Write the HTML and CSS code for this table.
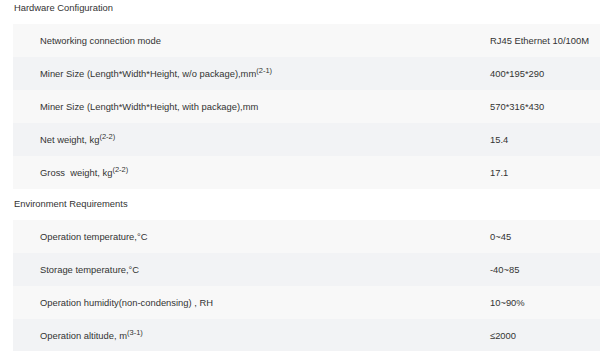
FILE: index.html
```html
<!DOCTYPE html>
<html lang="en">

<head>
    <meta charset="UTF-8">
    <meta name="viewport" content="width=device-width, initial-scale=1.0">
    <title>Specifications</title>
    <link rel="stylesheet" href="styles.css">
</head>

<body>

    <div class="spec-title">Hardware Configuration</div>
    <table class="spec-table">
        <tr>
            <td class="label">Networking connection mode</td>
            <td class="value">RJ45 Ethernet 10/100M</td>
        </tr>
        <tr>
            <td class="label">Miner Size (Length*Width*Height, w/o package),mm<sup>(2-1)</sup></td>
            <td class="value">400*195*290</td>
        </tr>
        <tr>
            <td class="label">Miner Size (Length*Width*Height, with package),mm</td>
            <td class="value">570*316*430</td>
        </tr>
        <tr>
            <td class="label">Net weight, kg<sup>(2-2)</sup></td>
            <td class="value">15.4</td>
        </tr>
        <tr>
            <td class="label">Gross&nbsp; weight, kg<sup>(2-2)</sup></td>
            <td class="value">17.1</td>
        </tr>
    </table>

    <div class="spec-title">Environment Requirements</div>
    <table class="spec-table">
        <tr>
            <td class="label">Operation temperature,°C</td>
            <td class="value">0~45</td>
        </tr>
        <tr>
            <td class="label">Storage temperature,°C</td>
            <td class="value">-40~85</td>
        </tr>
        <tr>
            <td class="label">Operation humidity(non-condensing) , RH</td>
            <td class="value">10~90%</td>
        </tr>
        <tr>
            <td class="label">Operation altitude, m<sup>(3-1)</sup></td>
            <td class="value">≤2000</td>
        </tr>
    </table>

</body>

</html>
```

FILE: styles.css
```css
body {
    font-family: "Liberation Sans", Arial, sans-serif;
    font-size: 9.4px;
    color: #333;
    margin: 0;
    padding: 0 0 0 13px;
    background-color: #fff;
}

.spec-title {
    padding-left: 1px;
    line-height: 16px;
    padding-bottom: 8px;
}

.spec-table {
    width: calc(100% + 10px);
    border-collapse: collapse;
    margin-bottom: 7px;
}

.spec-table tr {
    height: 33px;
    background-color: #f8f8f8;
}

.spec-table tr:nth-child(even) {
    background-color: #f2f3f5;
}

.spec-table td {
    padding: 0;
    vertical-align: middle;
}

.label {
    width: 450px;
    padding-left: 27px !important;
}

sup {
    font-size: 7.5px;
    line-height: 0;
    vertical-align: 4px;
}
```
